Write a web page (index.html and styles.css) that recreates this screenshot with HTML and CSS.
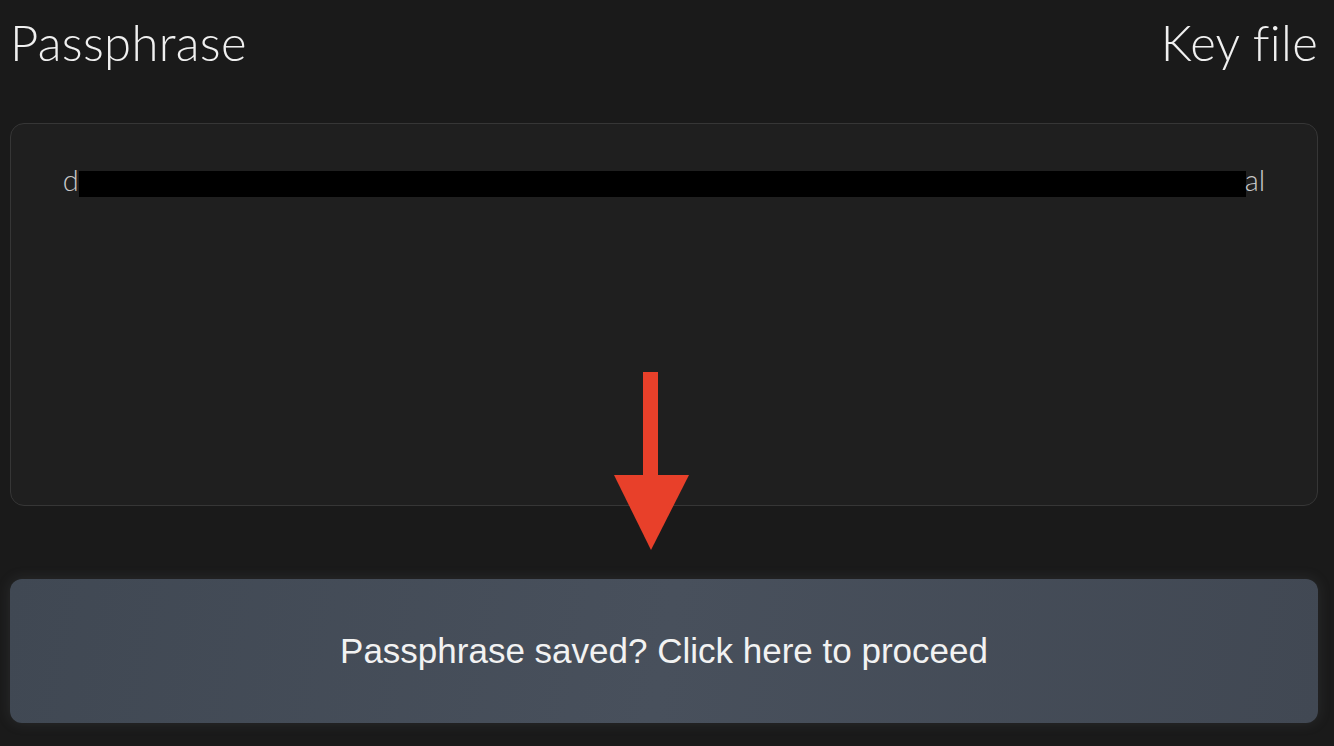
FILE: index.html
```html
<!DOCTYPE html>
<html lang="en">
<head>
<meta charset="utf-8">
<title>Passphrase</title>
<link rel="stylesheet" href="styles.css">
</head>
<body>
<div class="page">
  <header class="tabs">
    <h1 class="tab">Passphrase</h1>
    <h1 class="tab">Key file</h1>
  </header>
  <section class="phrase-box">
    <p class="phrase">d<span class="redact" aria-label="redacted"></span>al</p>
    <svg class="arrow" width="76" height="178" viewBox="0 0 76 178" aria-hidden="true">
      <rect x="29" y="0" width="15" height="104" fill="#e8402a"/>
      <polygon points="0,103 75,103 37,178" fill="#e8402a"/>
    </svg>
  </section>
  <button class="proceed">Passphrase saved? Click here to proceed</button>
</div>
</body>
</html>
```

FILE: styles.css
```css
html, body {
  margin: 0;
  padding: 0;
  background: #1a1a1a;
  height: 100%;
}
.page {
  padding: 0 16px 23px 10px;
  display: flex;
  flex-direction: column;
  height: 746px;
  box-sizing: border-box;
}
.tabs {
  display: flex;
  justify-content: space-between;
  align-items: flex-start;
  height: 123px;
}
.tab {
  margin: 12px 0 0 0;
  font-family: Lato, "Noto Sans", sans-serif;
  font-weight: 300;
  font-size: 49px;
  line-height: 60px;
  color: #f0f0f0;
  letter-spacing: 0.3px;
}
.phrase-box {
  position: relative;
  height: 383px;
  box-sizing: border-box;
  border: 1px solid #363636;
  border-radius: 14px;
  background: #1f1f1f;
  padding: 36px 20px 0;
}
.phrase {
  margin: 0;
  text-align: center;
  font-family: Lato, "Noto Sans", sans-serif;
  font-weight: 300;
  font-size: 29px;
  line-height: 40px;
  color: #c8c8c8;
  white-space: nowrap;
}
.redact {
  display: inline-block;
  width: 1167px;
  height: 26px;
  background: #000;
  vertical-align: -6px;
  margin: 0 -1px 0 0;
}
.arrow {
  position: absolute;
  left: 603px;
  top: 248px;
  z-index: 2;
}
.proceed {
  margin-top: 73px;
  height: 144px;
  border: none;
  border-radius: 12px;
  background: linear-gradient(100deg, #404853 0%, #48505c 50%, #414853 100%);
  box-shadow: 0 0 14px rgba(120, 125, 135, 0.18);
  color: #f2f2f2;
  font-family: "Liberation Sans", Arial, sans-serif;
  font-size: 35px;
  cursor: pointer;
  padding: 0;
}
```
